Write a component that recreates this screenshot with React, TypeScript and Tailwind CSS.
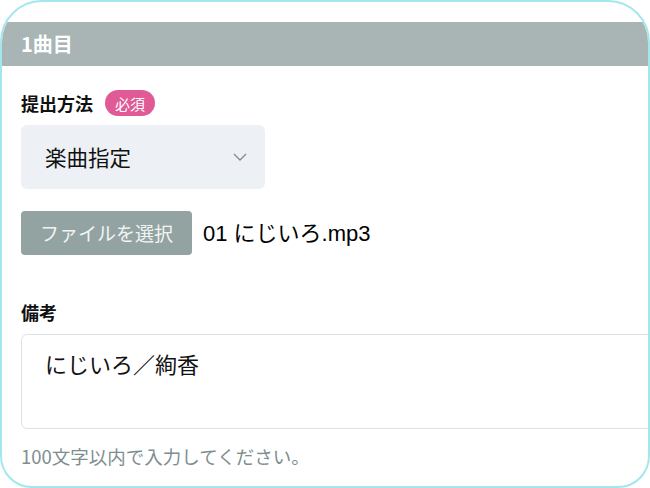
import React from 'react';

const App: React.FC = () => {
  return (
    <div
      className="w-[650px] h-[488px] bg-white"
      style={{ fontFamily: '"Noto Sans CJK JP", "Noto Sans", sans-serif' }}
    >
      <div className="w-[650px] h-[488px] border-2 border-[#a3e7ec] rounded-t-[42px] rounded-b-[32px] overflow-hidden bg-white pt-[20px]">
        <div className="h-[44px] bg-[#a8b5b4] flex items-center px-[19px]">
          <h3 className="text-[20px] font-bold text-white leading-none">1曲目</h3>
        </div>

        <div className="pl-[19px]">
          <div className="flex items-center gap-[12px] mt-[24px] h-[26px]">
            <span className="text-[18px] font-bold text-[#111] leading-none">提出方法</span>
            <span className="px-[10px] h-[26px] flex items-center rounded-full bg-[#e05a95] text-white text-[15px] leading-none">
              必須
            </span>
          </div>

          <div className="mt-[9px] w-[244px] h-[64px] rounded-[6px] bg-[#edf1f5] flex items-center justify-between pl-[24px] pr-[18px]">
            <span className="text-[21.5px] text-[#111]">楽曲指定</span>
            <svg width="14" height="8" viewBox="0 0 14 8" fill="none">
              <path d="M1 1l6 6 6-6" stroke="#7d8c8c" strokeWidth="1.3" />
            </svg>
          </div>

          <div className="mt-[22px] flex items-center gap-[11px]">
            <button className="w-[171px] h-[44px] rounded-[4px] bg-[#93a3a2] text-[#f2f4f4] text-[19px]">
              ファイルを選択
            </button>
            <span
              className="text-[22px] text-black"
              style={{ fontFamily: '"Liberation Sans", "Noto Sans CJK JP", sans-serif' }}
            >
              01 にじいろ.mp3
            </span>
          </div>

          <div className="mt-[48px] text-[18px] font-bold text-[#111] leading-none">備考</div>

          <div className="mt-[13px] w-[680px] h-[95px] border border-[#dde2e2] rounded-[6px] px-[23px] pt-[12px]">
            <span className="text-[22px] text-[#111]">にじいろ／絢香</span>
          </div>

          <p className="mt-[18px] text-[18.5px] text-[#7e8e8f] leading-none">100文字以内で入力してください。</p>
        </div>
      </div>
    </div>
  );
};

export default App;
